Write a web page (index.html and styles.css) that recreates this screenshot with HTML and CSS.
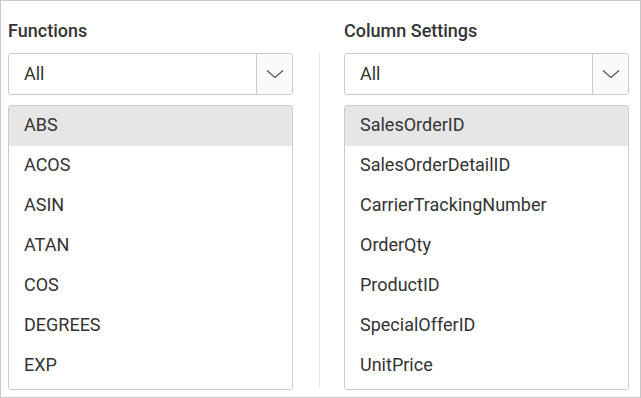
FILE: index.html
```html
<!DOCTYPE html>
<html lang="en">
<head>
  <meta charset="UTF-8">
  <title>Column Settings</title>
  <link rel="stylesheet" href="styles.css">
</head>
<body>
  <div class="panel">
    <div class="column">
      <h3 class="title">Functions</h3>
      <div class="dropdown">
        <span class="dropdown-value">All</span>
        <span class="dropdown-arrow">
          <svg width="18" height="10" viewBox="0 0 18 10"><path d="M1 1.5 L9 8.5 L17 1.5" fill="none" stroke="#555" stroke-width="1.3"/></svg>
        </span>
      </div>
      <ul class="list">
        <li class="selected">ABS</li>
        <li>ACOS</li>
        <li>ASIN</li>
        <li>ATAN</li>
        <li>COS</li>
        <li>DEGREES</li>
        <li>EXP</li>
      </ul>
    </div>

    <div class="divider"></div>

    <div class="column">
      <h3 class="title">Column Settings</h3>
      <div class="dropdown">
        <span class="dropdown-value">All</span>
        <span class="dropdown-arrow">
          <svg width="18" height="10" viewBox="0 0 18 10"><path d="M1 1.5 L9 8.5 L17 1.5" fill="none" stroke="#555" stroke-width="1.3"/></svg>
        </span>
      </div>
      <ul class="list">
        <li class="selected">SalesOrderID</li>
        <li>SalesOrderDetailID</li>
        <li>CarrierTrackingNumber</li>
        <li>OrderQty</li>
        <li>ProductID</li>
        <li>SpecialOfferID</li>
        <li>UnitPrice</li>
      </ul>
    </div>
  </div>
</body>
</html>
```

FILE: styles.css
```css
body {
  margin: 0;
  font-family: Roboto, 'Liberation Sans', sans-serif;
  color: #333;
  background: #ffffff;
}

.panel {
  width: 641px;
  height: 398px;
  box-sizing: border-box;
  border: 1px solid #c8c8c8;
  display: flex;
  padding: 0 11px 0 7px;
}

.column {
  width: 285px;
  display: flex;
  flex-direction: column;
}

.divider {
  width: 1px;
  background: #e3e3e3;
  margin: 52px 24px 10px 26px;
}

.title {
  margin: 0;
  padding-top: 20px;
  height: 52px;
  box-sizing: border-box;
  font-size: 18px;
  font-weight: 500;
  line-height: 20px;
  color: #333;
}

.dropdown {
  height: 42px;
  box-sizing: border-box;
  border: 1px solid #cccccc;
  border-radius: 3px;
  display: flex;
  align-items: stretch;
  overflow: hidden;
}

.dropdown-value {
  flex: 1;
  padding-left: 15px;
  font-size: 18px;
  line-height: 40px;
}

.dropdown-arrow {
  width: 35px;
  border-left: 1px solid #cccccc;
  background: #fafafa;
  display: flex;
  align-items: center;
  justify-content: center;
}

.list {
  list-style: none;
  margin: 10px 0 0;
  padding: 0;
  height: 285px;
  box-sizing: border-box;
  border: 1px solid #cccccc;
  border-radius: 3px;
  overflow: hidden;
}

.list li {
  height: 40px;
  line-height: 37px;
  padding-left: 15px;
  font-size: 18px;
}

.list li.selected {
  background: #e6e6e6;
}
```
